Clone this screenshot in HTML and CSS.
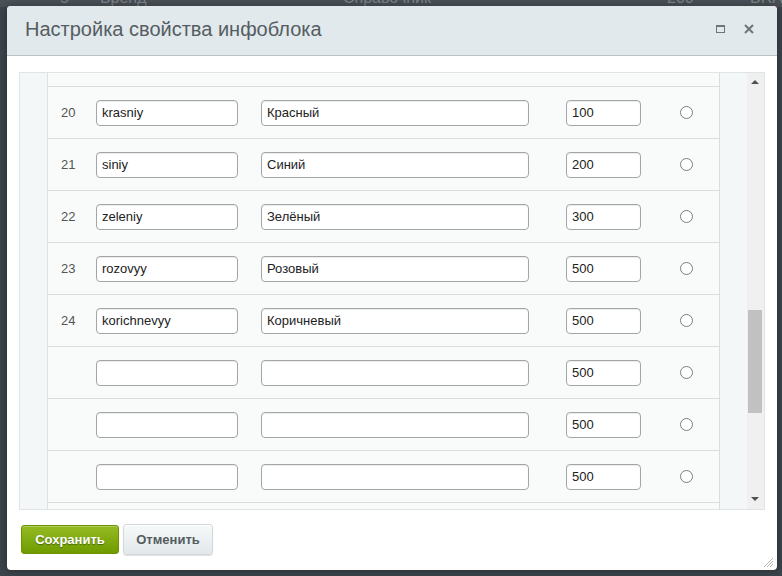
FILE: index.html
```html
<!DOCTYPE html>
<html lang="ru">
<head>
<meta charset="utf-8">
<title>Настройка свойства инфоблока</title>
<link rel="stylesheet" href="styles.css">
</head>
<body>
<div class="backdrop">
  <div class="bg-row">
    <span class="bg-c1">5</span>
    <span class="bg-c2">Бренд</span>
    <span class="bg-c3">Справочник</span>
    <span class="bg-c4">200</span>
    <span class="bg-c5">BRAND</span>
  </div>
</div>

<div class="dialog">
  <div class="header">
    <div class="title">Настройка свойства инфоблока</div>
    <div class="header-icons">
      <span class="icon-max"></span>
      <svg class="icon-close" width="10" height="10" viewBox="0 0 10 10"><path d="M1 1L9 9M9 1L1 9" stroke="#6b757a" stroke-width="2"/></svg>
    </div>
  </div>

  <div class="content">
    <div class="frame">
      <div class="gutter"></div>
      <div class="rows">
        <div class="row-partial"></div>
        <div class="row">
          <span class="num">20</span>
          <input class="in in-code" value="krasniy">
          <input class="in in-name" value="Красный">
          <input class="in in-sort" value="100">
          <span class="radio"></span>
        </div>
        <div class="row">
          <span class="num">21</span>
          <input class="in in-code" value="siniy">
          <input class="in in-name" value="Синий">
          <input class="in in-sort" value="200">
          <span class="radio"></span>
        </div>
        <div class="row">
          <span class="num">22</span>
          <input class="in in-code" value="zeleniy">
          <input class="in in-name" value="Зелёный">
          <input class="in in-sort" value="300">
          <span class="radio"></span>
        </div>
        <div class="row">
          <span class="num">23</span>
          <input class="in in-code" value="rozovyy">
          <input class="in in-name" value="Розовый">
          <input class="in in-sort" value="500">
          <span class="radio"></span>
        </div>
        <div class="row">
          <span class="num">24</span>
          <input class="in in-code" value="korichnevyy">
          <input class="in in-name" value="Коричневый">
          <input class="in in-sort" value="500">
          <span class="radio"></span>
        </div>
        <div class="row">
          <span class="num"></span>
          <input class="in in-code" value="">
          <input class="in in-name" value="">
          <input class="in in-sort" value="500">
          <span class="radio"></span>
        </div>
        <div class="row">
          <span class="num"></span>
          <input class="in in-code" value="">
          <input class="in in-name" value="">
          <input class="in in-sort" value="500">
          <span class="radio"></span>
        </div>
        <div class="row">
          <span class="num"></span>
          <input class="in in-code" value="">
          <input class="in in-name" value="">
          <input class="in in-sort" value="500">
          <span class="radio"></span>
        </div>
        <div class="row-partial"></div>
      </div>
      <div class="side"></div>
      <div class="scrollbar">
        <span class="arrow-up"></span>
        <span class="thumb"></span>
        <span class="arrow-down"></span>
      </div>
    </div>
  </div>

  <div class="footer">
    <button class="btn btn-save">Сохранить</button>
    <button class="btn btn-cancel">Отменить</button>
  </div>

  <svg class="grip" width="11" height="11" viewBox="0 0 11 11"><path d="M1 10L10 1M4 10L10 4M7 10L10 7" stroke="#b5b5b5" stroke-width="1"/></svg>
</div>
</body>
</html>
```

FILE: styles.css
```css
* { box-sizing: border-box; }

html, body {
  margin: 0;
  padding: 0;
}

body {
  width: 782px;
  height: 576px;
  overflow: hidden;
  background: #3a434a;
  font-family: "Liberation Sans", Arial, sans-serif;
  position: relative;
}

.backdrop {
  position: absolute;
  left: 0;
  top: 0;
  width: 782px;
  height: 576px;
  background: #3b444b;
}

.bg-row {
  position: absolute;
  left: 0;
  top: -12px;
  width: 782px;
  height: 19px;
  background: #4a5157;
  color: #7d858b;
  font-size: 16px;
}

.bg-row span { position: absolute; bottom: 0; }
.bg-c1 { left: 60px; }
.bg-c2 { left: 100px; }
.bg-c3 { left: 343px; }
.bg-c4 { left: 667px; }
.bg-c5 { left: 750px; }

.dialog {
  position: absolute;
  left: 7px;
  top: 6px;
  width: 770px;
  height: 564px;
  background: #fff;
  border-radius: 4px;
  box-shadow: 0 0 8px rgba(0,0,0,0.35);
  display: flex;
  flex-direction: column;
  overflow: hidden;
}

.header {
  height: 50px;
  flex: none;
  background: #e2e9ec;
  border-bottom: 1px solid #b9c2c6;
  display: flex;
  align-items: center;
  justify-content: space-between;
  padding: 0 23px 0 18px;
}

.title {
  font-family: "Liberation Sans", Arial, sans-serif;
  font-size: 20px;
  color: #555d62;
  margin-top: -3px;
}

.header-icons {
  display: flex;
  align-items: center;
  gap: 19px;
  margin-top: -3px;
}

.icon-max {
  display: block;
  width: 9px;
  height: 8px;
  border: 1px solid #6b757a;
  border-top-width: 2px;
}

.icon-close { display: block; }

.content {
  flex: none;
  padding: 16px 12px 0 12px;
}

.frame {
  height: 438px;
  border: 1px solid #dfe4e6;
  display: flex;
  overflow: hidden;
  background: #f9fbfb;
}

.gutter {
  width: 28px;
  flex: none;
  background: #f4f7f8;
  border-right: 1px solid #dde2e4;
}

.rows {
  width: 672px;
  flex: none;
  background: #f9fbfb;
  border-right: 1px solid #d9dddf;
}

.row-partial {
  height: 14px;
  border-bottom: 1px solid #d9dcde;
}

.row {
  height: 52px;
  border-bottom: 1px solid #d9dcde;
  display: flex;
  align-items: center;
}

.num {
  width: 48px;
  flex: none;
  padding-left: 13px;
  font-size: 13px;
  color: #555;
}

.in {
  height: 26px;
  border: 1px solid #a3a6a8;
  border-radius: 4px;
  background: #fff;
  box-shadow: inset 0 1px 1px rgba(0,0,0,0.08);
  font-family: "Liberation Sans", Arial, sans-serif;
  font-size: 13px;
  color: #222;
  padding: 0 5px;
  margin: 0;
  flex: none;
  outline: none;
}

.in-code { width: 142px; }
.in-name { width: 268px; margin-left: 23px; }
.in-sort { width: 75px; margin-left: 37px; }

.radio {
  display: block;
  width: 13px;
  height: 13px;
  border: 1px solid #7e7e7e;
  border-radius: 50%;
  background: #fff;
  margin-left: 39px;
  flex: none;
}

.side {
  width: 27px;
  flex: none;
  background: #f4f7f8;
}

.scrollbar {
  width: 17px;
  flex: none;
  background: #f0f0f0;
  position: relative;
}

.arrow-up, .arrow-down {
  position: absolute;
  left: 4px;
  width: 0;
  height: 0;
  border-left: 4px solid transparent;
  border-right: 4px solid transparent;
}

.arrow-up {
  top: 7px;
  border-bottom: 4px solid #505050;
}

.arrow-down {
  bottom: 8px;
  border-top: 4px solid #505050;
}

.thumb {
  position: absolute;
  left: 1px;
  width: 14px;
  top: 237px;
  height: 103px;
  background: #c1c1c1;
}

.footer {
  flex: none;
  display: flex;
  gap: 4px;
  padding: 14px 0 0 14px;
  align-items: flex-start;
}

.btn {
  font-family: "Liberation Sans", Arial, sans-serif;
  font-weight: bold;
  font-size: 13px;
  border-radius: 3px;
  cursor: pointer;
  margin: 0;
}

.btn-save {
  width: 98px;
  height: 29px;
  margin-top: 1px;
  color: #fff;
  border: 1px solid #6c9300;
  background: linear-gradient(#95bb23, #6f9b00);
  text-shadow: 0 1px 1px rgba(40,60,0,0.6);
  box-shadow: inset 0 1px 0 rgba(255,255,255,0.25);
}

.btn-cancel {
  width: 90px;
  height: 31px;
  color: #535c61;
  border: 1px solid #d2d9dc;
  background: linear-gradient(#f7f9fa, #e2e8ea);
  box-shadow: 0 1px 1px rgba(0,0,0,0.12), inset 0 1px 0 #fff;
}

.grip {
  position: absolute;
  right: 3px;
  bottom: 2px;
}
```
